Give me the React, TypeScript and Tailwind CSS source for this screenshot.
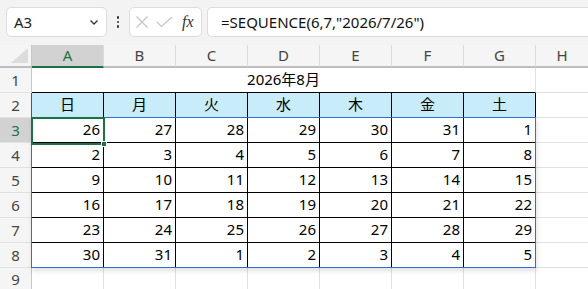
import React from 'react'

const cols = ['A', 'B', 'C', 'D', 'E', 'F', 'G']
const days = ['日', '月', '火', '水', '木', '金', '土']

// SEQUENCE(6,7,"2026/7/26") -> dates shown as day numbers
const start = new Date(2026, 6, 26)
const weeks = Array.from({ length: 6 }, (_, r) =>
    Array.from({ length: 7 }, (_, c) => {
        const d = new Date(start)
        d.setDate(start.getDate() + r * 7 + c)
        return d.getDate()
    })
)

const font = { fontFamily: '"Noto Sans", "Noto Sans CJK JP", sans-serif' }

const RowHead = ({ n, active, dark }: { n: number; active?: boolean; dark?: boolean }) => (
    <div
        className={`flex items-center justify-center border-b border-b-[#e1e1e1] border-r text-[15px] ${
            active ? 'bg-[#d2d2d2] text-[#1e7145]' : 'bg-[#f5f5f5] text-[#444]'
        } ${dark ? 'border-r-[#555]' : 'border-r-[#c8c8c8]'}`}
    >
        {n}
    </div>
)

export default function App() {
    return (
        <div className="w-[588px] h-[289px] overflow-hidden bg-[#f3f3f3] relative" style={font}>
            {/* formula bar */}
            <div className="h-[45px] flex items-start pt-[7px] pl-[6px] gap-0">
                <div className="w-[101px] h-[30px] bg-white border border-[#dcdcdc] rounded-[5px] flex items-center justify-between pl-[7px] pr-[6px]">
                    <span className="text-[15px] text-[#222]">A3</span>
                    <svg width="12" height="12" viewBox="0 0 12 12" fill="none" stroke="#333" strokeWidth="1.3">
                        <path d="M2.5 4.5 L6 8 L9.5 4.5" />
                    </svg>
                </div>
                <div className="w-[22px] h-[30px] flex flex-col items-center justify-center gap-[2px]">
                    <span className="w-[2.5px] h-[2.5px] bg-[#333] rounded-full" />
                    <span className="w-[2.5px] h-[2.5px] bg-[#333] rounded-full" />
                    <span className="w-[2.5px] h-[2.5px] bg-[#333] rounded-full" />
                </div>
                <div className="w-[73px] h-[30px] bg-white border border-[#dcdcdc] rounded-[5px] flex items-center pl-[5px] gap-[7px]">
                    <svg width="14" height="14" viewBox="0 0 14 14" stroke="#c4c4c4" strokeWidth="1.2">
                        <path d="M1.5 1.5 L12.5 12.5 M12.5 1.5 L1.5 12.5" />
                    </svg>
                    <svg width="17" height="14" viewBox="0 0 17 14" fill="none" stroke="#c4c4c4" strokeWidth="1.2">
                        <path d="M1 7 L5.5 11.5 L16 2" />
                    </svg>
                    <span className="text-[16px] italic text-[#333] ml-[2px]" style={{ fontFamily: '"Liberation Serif", serif' }}>
                        fx
                    </span>
                </div>
                <div className="ml-[5px] flex-1 h-[30px] bg-white border border-[#dcdcdc] rounded-l-[5px] border-r-0 flex items-center pl-[13px]">
                    <span className="text-[15px] text-[#111]">=SEQUENCE(6,7,"2026/7/26")</span>
                </div>
            </div>

            {/* sheet */}
            <div className="grid grid-cols-[32px_repeat(7,72px)_1fr] grid-rows-[23px_repeat(8,25px)_1fr] h-[244px] bg-white">
                {/* corner */}
                <div className="bg-[#f5f5f5] border-r border-r-[#c8c8c8] border-b-2 border-b-[#bdbdbd] flex items-end justify-end p-[3px]">
                    <svg width="17" height="15" viewBox="0 0 17 15">
                        <path d="M17 0 L17 15 L0 15 Z" fill="#dcdcdc" />
                    </svg>
                </div>
                {cols.map((c, i) => (
                    <div
                        key={c}
                        className={`flex items-center justify-center text-[15px] border-r border-r-[#dcdcdc] border-b-2 ${
                            i === 0 ? 'bg-[#d2d2d2] text-[#1e7145] border-b-[#1e7145]' : 'bg-[#f5f5f5] text-[#444] border-b-[#bdbdbd]'
                        }`}
                    >
                        {c}
                    </div>
                ))}
                <div className="flex items-center justify-center text-[15px] bg-[#f5f5f5] text-[#444] border-b-2 border-b-[#bdbdbd]">H</div>

                {/* row 1 */}
                <RowHead n={1} />
                <div className="col-span-7 flex items-end justify-center pb-[2px] text-[15px] text-black border-b border-b-black border-r border-r-[#e1e1e1]">
                    2026年8月
                </div>
                <div className="border-b border-b-[#e1e1e1]" />

                {/* row 2 */}
                <RowHead n={2} dark />
                {days.map((d) => (
                    <div
                        key={d}
                        className="bg-[#c9ecfa] border-r border-b border-black flex items-end justify-center pb-[2px] text-[15px] text-black"
                    >
                        {d}
                    </div>
                ))}
                <div className="border-b border-b-[#e1e1e1]" />

                {/* rows 3-8 */}
                {weeks.map((w, r) => (
                    <React.Fragment key={r}>
                        <RowHead n={r + 3} active={r === 0} dark />
                        {w.map((n, c) => (
                            <div
                                key={c}
                                className="border-r border-b border-black flex items-end justify-end pr-[3px] pb-[2px] text-[15px] text-black"
                            >
                                {n}
                            </div>
                        ))}
                        <div className="border-b border-b-[#e1e1e1]" />
                    </React.Fragment>
                ))}

                {/* row 9 */}
                <RowHead n={9} />
                {cols.map((c) => (
                    <div key={c} className="border-r border-r-[#e1e1e1]" />
                ))}
                <div />
            </div>

            {/* spill range outline */}
            <div className="absolute left-[31px] top-[117px] w-[505px] h-[151px] border border-[#2f6fd0] shadow-[1px_3px_5px_rgba(0,0,0,0.12)] pointer-events-none" />
            {/* active cell */}
            <div className="absolute left-[31px] top-[117px] w-[74px] h-[28px] border-2 border-[#1e7145] pointer-events-none" />
            <div className="absolute left-[101px] top-[141px] w-[6px] h-[6px] bg-[#1e7145] border border-white pointer-events-none" />
        </div>
    )
}
